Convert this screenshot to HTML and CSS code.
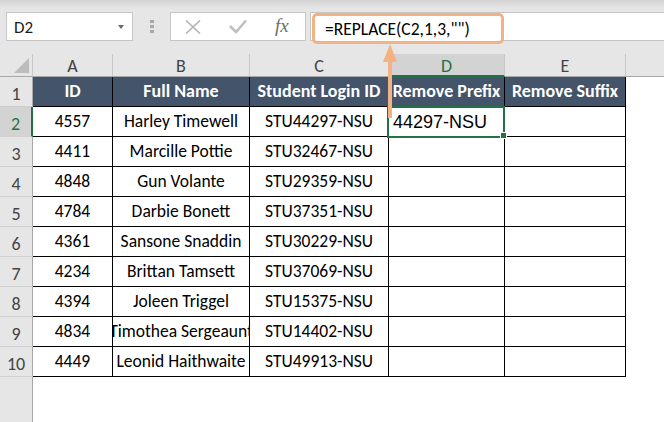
FILE: index.html
```html
<!DOCTYPE html>
<html>
<head>
<meta charset="utf-8">
<link rel="stylesheet" href="styles.css">
</head>
<body>
<div class="app">
  <div class="fbar">
    <div class="namebox"><span class="nb-text">D2</span><span class="caret"></span></div>
    <div class="grip"><i></i><i></i><i></i></div>
    <div class="fbtns">
      <svg class="ic-x" width="16" height="14" viewBox="0 0 16 14"><path d="M1 0.5 L15 13.5 M15 0.5 L1 13.5" stroke="#b4b4b4" stroke-width="1.6" fill="none"/></svg>
      <svg class="ic-check" width="18" height="15" viewBox="0 0 18 15"><path d="M1 7 L7 13 L17 1.5" stroke="#c0c0c0" stroke-width="2.6" fill="none"/></svg>
      <span class="fx">fx</span>
    </div>
    <div class="finput"></div>
  </div>

  <div class="sheet">
    <div class="corner"></div>
    <div class="ch">A</div><div class="ch">B</div><div class="ch">C</div><div class="ch sel">D</div><div class="ch">E</div><div class="ch last"></div>

    <div class="rh">1</div>
    <div class="h">ID</div><div class="h">Full Name</div><div class="h">Student Login ID</div><div class="h">Remove Prefix</div><div class="h">Remove Suffix</div><div class="f"></div>

    <div class="rh sel">2</div>
    <div class="c">4557</div><div class="c">Harley Timewell</div><div class="c">STU44297-NSU</div><div class="c act">44297-NSU</div><div class="c"></div><div class="f"></div>

    <div class="rh">3</div>
    <div class="c">4411</div><div class="c">Marcille Pottie</div><div class="c">STU32467-NSU</div><div class="c"></div><div class="c"></div><div class="f"></div>

    <div class="rh">4</div>
    <div class="c">4848</div><div class="c">Gun Volante</div><div class="c">STU29359-NSU</div><div class="c"></div><div class="c"></div><div class="f"></div>

    <div class="rh">5</div>
    <div class="c">4784</div><div class="c">Darbie Bonett</div><div class="c">STU37351-NSU</div><div class="c"></div><div class="c"></div><div class="f"></div>

    <div class="rh">6</div>
    <div class="c">4361</div><div class="c">Sansone Snaddin</div><div class="c">STU30229-NSU</div><div class="c"></div><div class="c"></div><div class="f"></div>

    <div class="rh">7</div>
    <div class="c">4234</div><div class="c">Brittan Tamsett</div><div class="c">STU37069-NSU</div><div class="c"></div><div class="c"></div><div class="f"></div>

    <div class="rh">8</div>
    <div class="c">4394</div><div class="c">Joleen Triggel</div><div class="c">STU15375-NSU</div><div class="c"></div><div class="c"></div><div class="f"></div>

    <div class="rh">9</div>
    <div class="c">4834</div><div class="c">Timothea Sergeaunt</div><div class="c">STU14402-NSU</div><div class="c"></div><div class="c"></div><div class="f"></div>

    <div class="rh">10</div>
    <div class="c">4449</div><div class="c">Leonid Haithwaite</div><div class="c">STU49913-NSU</div><div class="c"></div><div class="c"></div><div class="f"></div>

    <div class="rh empty"></div>
    <div class="blank"></div>
  </div>

  <div class="callout">=REPLACE(C2,1,3,"")</div>
  <svg class="arrow" width="18" height="74" viewBox="0 0 18 74">
    <path d="M9 16 L9 74" stroke="#f4b183" stroke-width="4" fill="none"/>
    <polygon points="9,0 2,18 16,18" fill="#f4b183"/>
  </svg>
</div>
</body>
</html>
```

FILE: styles.css
```css
body {
  margin: 0;
  background: #fff;
  font-family: Carlito, Lato, "Liberation Sans", sans-serif;
}

.app {
  position: relative;
  width: 664px;
  height: 422px;
  overflow: hidden;
  background: #fff;
}

/* formula bar */
.fbar {
  height: 54px;
  box-sizing: border-box;
  padding-top: 12px;
  display: flex;
  align-items: flex-start;
  background: linear-gradient(#d3d3d3 0, #e6e6e6 9px, #e6e6e6 100%);
}

.namebox {
  margin-left: 6px;
  width: 127px;
  height: 29px;
  box-sizing: border-box;
  border: 1px solid #c6c6c6;
  background: #fff;
  display: flex;
  align-items: center;
  justify-content: space-between;
  padding: 0 8px 0 7px;
  font-size: 17px;
  color: #1a1a1a;
}

.nb-text {
  padding-top: 1px;
}

.caret {
  width: 0;
  height: 0;
  border-top: 4px solid #6a6a6a;
  border-left: 3.5px solid transparent;
  border-right: 3.5px solid transparent;
}

.grip {
  margin-left: 17px;
  padding-top: 8px;
  display: flex;
  flex-direction: column;
  gap: 2px;
}

.grip i {
  display: block;
  width: 4px;
  height: 3px;
  background: #a8a8a8;
}

.fbtns {
  margin-left: 16px;
  width: 136px;
  height: 29px;
  box-sizing: border-box;
  border: 1px solid #c6c6c6;
  background: #fff;
  display: flex;
  align-items: center;
  padding-left: 14px;
}

.ic-x {
  display: block;
}

.ic-check {
  display: block;
  margin-left: 28px;
}

.fx {
  margin-left: 28px;
  font-family: "Liberation Serif", serif;
  font-style: italic;
  font-size: 19px;
  color: #6b6b6b;
  line-height: 1;
  padding-bottom: 2px;
}

.finput {
  margin-left: 4px;
  flex: 1;
  height: 29px;
  box-sizing: border-box;
  border: 1px solid #c6c6c6;
  border-right: none;
  background: #fff;
}

/* annotation overlay */
.callout {
  position: absolute;
  left: 312px;
  top: 13px;
  width: 192px;
  height: 31px;
  box-sizing: border-box;
  border: 3px solid #f4b183;
  border-radius: 5px;
  background: #fff;
  display: flex;
  align-items: center;
  padding-left: 10px;
  font-size: 17.5px;
  color: #000;
  z-index: 3;
}

.arrow {
  position: absolute;
  left: 381px;
  top: 44px;
  z-index: 4;
}

/* sheet grid */
.sheet {
  display: grid;
  grid-template-columns: 33px 80px 137px 139px 116px 121px 1fr;
  grid-template-rows: 23px repeat(10, 30px) 1fr;
  height: 368px;
}

.sheet > div {
  box-sizing: border-box;
  white-space: nowrap;
}

.corner {
  position: relative;
  background: #e6e6e6;
  border-right: 1px solid #c8c8c8;
  border-bottom: 1px solid #a8a8a8;
}

.corner::after {
  content: "";
  position: absolute;
  right: 3px;
  bottom: 3px;
  width: 0;
  height: 0;
  border-left: 15px solid transparent;
  border-bottom: 15px solid #bcbcbc;
}

.ch {
  background: #e6e6e6;
  border-right: 1px solid #c8c8c8;
  border-bottom: 1px solid #a8a8a8;
  display: flex;
  align-items: center;
  justify-content: center;
  font-size: 18px;
  color: #444;
  padding-top: 2px;
}

.ch.last {
  border-right: none;
}

.ch.sel {
  background: #d3d3d3;
  color: #217346;
  border-bottom: 2px solid #217346;
  padding-top: 3px;
}

.rh {
  background: #e6e6e6;
  border-right: 1px solid #a8a8a8;
  border-bottom: 1px solid #cfcfcf;
  display: flex;
  align-items: flex-end;
  justify-content: center;
  font-size: 18px;
  line-height: 20px;
  color: #444;
  padding-bottom: 2px;
}

.rh.sel {
  background: #d3d3d3;
  color: #217346;
  border-right: 2px solid #217346;
}

.rh.empty {
  border-bottom: none;
}

.h {
  background: #44546a;
  color: #fff;
  font-weight: bold;
  font-size: 18px;
  line-height: 20px;
  border-right: 1px solid #000;
  border-bottom: 1px solid #000;
  display: flex;
  align-items: flex-end;
  justify-content: center;
  padding-bottom: 5px;
  overflow: hidden;
}

.c {
  background: #fff;
  color: #000;
  font-size: 17.5px;
  line-height: 19px;
  border-right: 1px solid #000;
  border-bottom: 1px solid #000;
  display: flex;
  align-items: flex-end;
  justify-content: center;
  padding-bottom: 5px;
  overflow: hidden;
}

.c.act {
  position: relative;
  z-index: 2;
  overflow: visible;
  justify-content: flex-start;
  padding-left: 4px;
  padding-bottom: 4px;
  font-family: "Liberation Sans", Arial, sans-serif;
  font-size: 18px;
}

.c.act::before {
  content: "";
  position: absolute;
  left: -2px;
  top: -1px;
  right: -1px;
  bottom: -2px;
  border: 2px solid #217346;
  pointer-events: none;
}

.c.act::after {
  content: "";
  position: absolute;
  right: -3px;
  bottom: -3px;
  width: 5px;
  height: 5px;
  background: #217346;
  border: 1px solid #fff;
}

.f {
  background: #fff;
}

.blank {
  grid-column: 2 / -1;
  background: #fff;
}
```
